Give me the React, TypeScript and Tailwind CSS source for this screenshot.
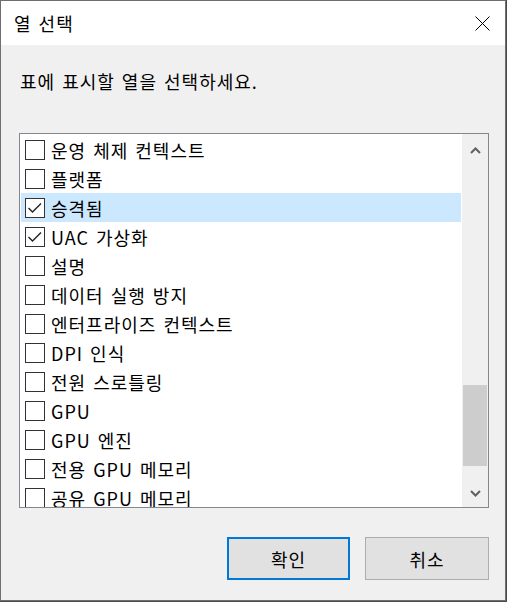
import React from "react";

const items: { label: string; checked: boolean; selected?: boolean }[] = [
  { label: "운영 체제 컨텍스트", checked: false },
  { label: "플랫폼", checked: false },
  { label: "승격됨", checked: true, selected: true },
  { label: "UAC 가상화", checked: true },
  { label: "설명", checked: false },
  { label: "데이터 실행 방지", checked: false },
  { label: "엔터프라이즈 컨텍스트", checked: false },
  { label: "DPI 인식", checked: false },
  { label: "전원 스로틀링", checked: false },
  { label: "GPU", checked: false },
  { label: "GPU 엔진", checked: false },
  { label: "전용 GPU 메모리", checked: false },
  { label: "공유 GPU 메모리", checked: false },
];

function Chevron({ up }: { up?: boolean }) {
  return (
    <svg width="11" height="7" viewBox="0 0 11 7">
      <polyline
        points={up ? "1,6 5.5,1.5 10,6" : "1,1 5.5,5.5 10,1"}
        fill="none"
        stroke="#606060"
        strokeWidth="2"
      />
    </svg>
  );
}

export default function App() {
  return (
    <div className="min-h-screen bg-[#4a4a4a]">
      <div className="w-[506px] h-[601px] border border-[#6f6f6f] bg-[#f0f0f0] flex flex-col text-black [font-family:'Noto_Sans_CJK_KR',sans-serif]">
        <div className="h-[44px] bg-white flex items-center justify-between pl-[13px] pr-[15px] shrink-0">
          <span className="text-[18px] leading-none tracking-[1px] [word-spacing:2px]">열 선택</span>
          <svg width="15" height="15" viewBox="0 0 15 15">
            <path d="M0.5 0.5 L14.5 14.5 M14.5 0.5 L0.5 14.5" stroke="#000" strokeWidth="1" fill="none" />
          </svg>
        </div>
        <div className="mt-[24px] h-[24px] pl-[19px] flex items-center text-[18px] leading-none tracking-[1px] [word-spacing:2px]">
          표에 표시할 열을 선택하세요.
        </div>
        <div className="mt-[40px] ml-[18px] w-[470px] h-[375px] border border-[#828790] bg-white flex shrink-0">
          <div className="flex-1 pt-[1px] pl-[1px] pr-[1px] overflow-hidden">
            {items.map((it) => (
              <div
                key={it.label}
                className={`h-[29px] flex items-center ${it.selected ? "bg-[#cce8ff]" : ""}`}
              >
                <div className="ml-[4px] w-[20px] h-[20px] border border-[#333333] bg-white shrink-0 relative">
                  {it.checked && (
                    <svg className="absolute left-0 top-0" width="18" height="18" viewBox="0 0 18 18">
                      <polyline points="2.5,9 6.5,13 15,4.5" fill="none" stroke="#222" strokeWidth="1.4" />
                    </svg>
                  )}
                </div>
                <span className="ml-[6px] text-[18px] leading-none whitespace-nowrap tracking-[1px] [word-spacing:2px]">
                  {it.label}
                </span>
              </div>
            ))}
          </div>
          <div className="w-[26px] bg-[#f0f0f0] flex flex-col shrink-0">
            <div className="h-[32px] flex items-center justify-center">
              <Chevron up />
            </div>
            <div className="h-[219px]" />
            <div className="mx-[1px] h-[81px] bg-[#cdcdcd]" />
            <div className="flex-1" />
            <div className="h-[27px] flex items-center justify-center">
              <Chevron />
            </div>
          </div>
        </div>
        <div className="mt-[29px] flex justify-end gap-[15px] pr-[16px]">
          <button className="w-[123px] h-[43px] border-2 border-[#0078d7] bg-[#e1e1e1] text-[18px] leading-none tracking-[1px]">
            확인
          </button>
          <button className="w-[124px] h-[43px] border border-[#adadad] bg-[#e1e1e1] text-[18px] leading-none tracking-[1px]">
            취소
          </button>
        </div>
      </div>
    </div>
  );
}
